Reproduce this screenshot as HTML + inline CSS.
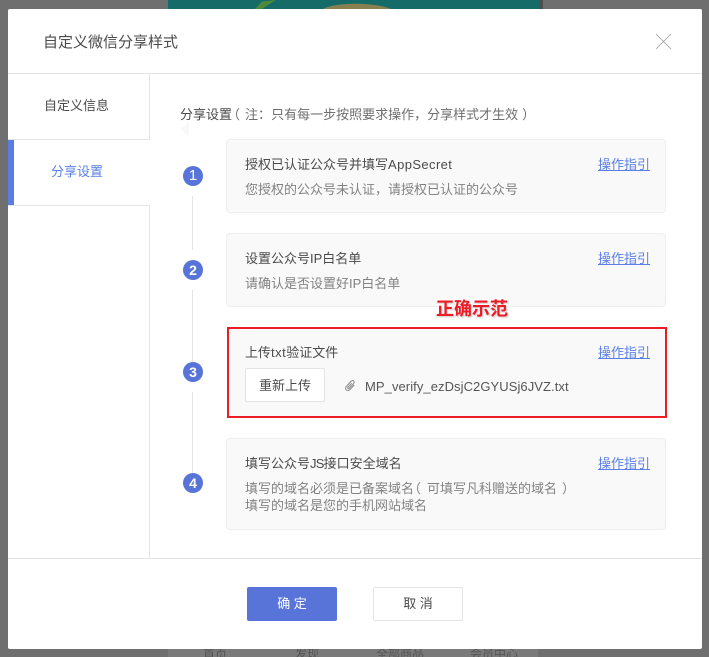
<!DOCTYPE html>
<html lang="zh">
<head>
<meta charset="utf-8">
<style>
html,body{margin:0;padding:0;width:709px;height:657px;overflow:hidden;}
#w{position:absolute;left:0;top:0;width:709px;height:657px;overflow:hidden;background:#6f6f6f;font-family:"Liberation Sans","Noto Sans CJK SC",sans-serif;color:#333;}
.a{position:absolute;}
.t{position:absolute;white-space:nowrap;font-size:13px;line-height:18px;}
.card{position:absolute;left:226px;width:440px;background:#f9f9f9;border:1px solid #eeeeee;border-radius:4px;box-sizing:border-box;}
.num{position:absolute;left:183px;width:20px;height:20px;border-radius:50%;background:#5874d8;color:#fff;font-size:14px;font-weight:bold;line-height:20px;text-align:center;}
.line{position:absolute;left:192px;width:1px;background:#e3e3e8;}
.lnk{position:absolute;left:598px;white-space:nowrap;font-size:13px;line-height:18px;color:#5a80e6;text-decoration:underline;}
.sub{color:#828282;}
.p{font-family:"Noto Sans CJK TC",sans-serif;}
.l{position:relative;left:-5px;}
.r{position:relative;left:4px;}
.b{height:12px;overflow:hidden;}
</style>
</head>
<body>
<div id="w">
<div class="a" style="left:168px;top:0;width:371px;height:9px;background:#146b68;"></div>
<div class="a" style="left:539px;top:0;width:4px;height:9px;background:#4e4e4e;"></div>
<svg class="a" style="left:250px;top:0;" width="30" height="9" viewBox="0 0 30 9"><path d="M5 9L12 1.5L26 0L18 5L12 9Z" fill="#4f8a3c"/></svg>
<svg class="a" style="left:320px;top:0;" width="75" height="9" viewBox="0 0 75 9"><path d="M3 9C15 2 55 2 71 9Z" fill="#86814f"/></svg>
<div class="a" style="left:168px;top:649px;width:370px;height:8px;background:#7a7a7a;"></div>
<div class="t b" style="left:203px;top:645px;color:#555;font-size:12px;">首页</div>
<div class="t b" style="left:295px;top:645px;color:#555;font-size:12px;">发现</div>
<div class="t b" style="left:376px;top:645px;color:#555;font-size:12px;">全部商品</div>
<div class="t b" style="left:470px;top:645px;color:#555;font-size:12px;">会员中心</div>

<!-- modal -->
<div class="a" style="left:8px;top:9px;width:694px;height:640px;background:#fff;border-radius:2px;"></div>
<div class="t" style="left:43px;top:32px;font-size:15px;line-height:21px;color:#4a4a4a;">自定义微信分享样式</div>
<svg class="a" style="left:655px;top:33px;" width="17" height="17" viewBox="0 0 17 17"><path d="M1 1L16 16M16 1L1 16" stroke="#9a9a9a" stroke-width=".8" fill="none"/></svg>
<div class="a" style="left:8px;top:73px;width:694px;height:1px;background:#e3e3e8;"></div>

<!-- sidebar -->
<div class="a" style="left:149px;top:74px;width:1px;height:66px;background:#e3e3e8;"></div>
<div class="a" style="left:149px;top:205px;width:1px;height:353px;background:#e3e3e8;"></div>
<div class="a" style="left:8px;top:139px;width:142px;height:1px;background:#e3e3e8;"></div>
<div class="a" style="left:8px;top:205px;width:142px;height:1px;background:#e3e3e8;"></div>
<div class="a" style="left:8px;top:140px;width:6px;height:65px;background:#5a7de0;"></div>
<div class="t" style="left:44px;top:97px;color:#4a4a4a;">自定义信息</div>
<div class="t" style="left:51px;top:163px;color:#5a80e6;">分享设置</div>
<div class="a" style="left:8px;top:558px;width:694px;height:1px;background:#e3e3e8;"></div>

<!-- heading -->
<div class="t" style="left:180px;top:105px;color:#6e6e6e;"><span style="color:#4a4a4a">分享设置</span><span class="l">（</span>注<span class="p">：</span>只有每一步按照要求操作<span class="p">，</span>分享样式才生效<span class="r">）</span></div>
<div class="a" style="left:180px;top:122px;width:9px;height:14px;background:#f8f8f8;clip-path:polygon(100% 0,0 50%,100% 100%);"></div>

<!-- timeline -->
<div class="line" style="top:196px;height:54px;"></div>
<div class="line" style="top:290px;height:72px;"></div>
<div class="line" style="top:392px;height:81px;"></div>
<div class="num" style="top:166px;font-weight:normal;font-size:15px;">1</div>
<div class="num" style="top:260px;">2</div>
<div class="num" style="top:362px;">3</div>
<div class="num" style="top:473px;">4</div>

<!-- card 1 -->
<div class="card" style="top:139px;height:74px;"></div>
<div class="t" style="left:245px;top:156px;color:#4a4a4a;">授权已认证公众号并填写<span style="letter-spacing:.4px">AppSecret</span></div>
<div class="t sub" style="left:245px;top:180px;">您授权的公众号未认证<span class="p">，</span>请授权已认证的公众号</div>
<div class="lnk" style="top:156px;">操作指引</div>

<!-- card 2 -->
<div class="card" style="top:233px;height:74px;"></div>
<div class="t" style="left:245px;top:250px;color:#4a4a4a;">设置公众号IP白名单</div>
<div class="t sub" style="left:245px;top:275px;">请确认是否设置好IP白名单</div>
<div class="lnk" style="top:250px;">操作指引</div>

<!-- annotation -->
<div class="t" style="left:436px;top:298px;font-size:18px;line-height:22px;font-weight:bold;color:#ed1c24;text-shadow:1px 1px 0 #d8d8d8,-1px -1px 0 #fff,1px -1px 0 #fff,-1px 1px 0 #e4e4e4,2px 2px 0 #eeeeee;">正确示范</div>

<!-- card 3 -->
<div class="a" style="left:227px;top:327px;width:440px;height:91px;box-sizing:border-box;background:#f9f9f9;border:2px solid #ed1c24;"></div>
<div class="t" style="left:245px;top:344px;color:#4a4a4a;">上传<span style="letter-spacing:.5px">txt</span>验证文件</div>
<div class="lnk" style="top:344px;">操作指引</div>
<div class="a" style="left:245px;top:368px;width:80px;height:34px;box-sizing:border-box;background:#fff;border:1px solid #e3e3e8;border-radius:2px;font-size:13px;line-height:33px;text-align:center;color:#4a4a4a;">重新上传</div>
<svg class="a" style="left:343px;top:379px;" width="14" height="14" viewBox="0 0 14 14"><g transform="rotate(42 7 7)"><path d="M9.4 3.5V10a2.4 2.4 0 0 1-4.8 0V2.6a1.7 1.7 0 0 1 3.4 0V9.4a.8 .8 0 0 1-1.6 0V4" stroke="#858585" stroke-width="1" fill="none"/></g></svg>
<div class="t" style="left:365px;top:378px;color:#555;letter-spacing:.07px;">MP_verify_ezDsjC2GYUSj6JVZ.txt</div>

<!-- card 4 -->
<div class="card" style="top:438px;height:92px;"></div>
<div class="t" style="left:245px;top:455px;color:#4a4a4a;">填写公众号<span style="letter-spacing:-.8px">JS</span>接口安全域名</div>
<div class="t sub" style="left:245px;top:480px;">填写的域名必须是已备案域名<span class="l" style="left:-6px;">（</span>可填写凡科赠送的域名<span class="r" style="left:5px;">）</span></div>
<div class="t sub" style="left:245px;top:497px;">填写的域名是您的手机网站域名</div>
<div class="lnk" style="top:455px;">操作指引</div>

<!-- footer buttons -->
<div class="a" style="left:247px;top:587px;width:90px;height:34px;background:#5874d8;border-radius:2px;color:#fff;font-size:13px;line-height:34px;text-align:center;">确 定</div>
<div class="a" style="left:373px;top:587px;width:90px;height:34px;box-sizing:border-box;background:#fff;border:1px solid #e3e3e8;border-radius:2px;color:#4a4a4a;font-size:13px;line-height:32px;text-align:center;">取 消</div>
</div>
</body>
</html>
